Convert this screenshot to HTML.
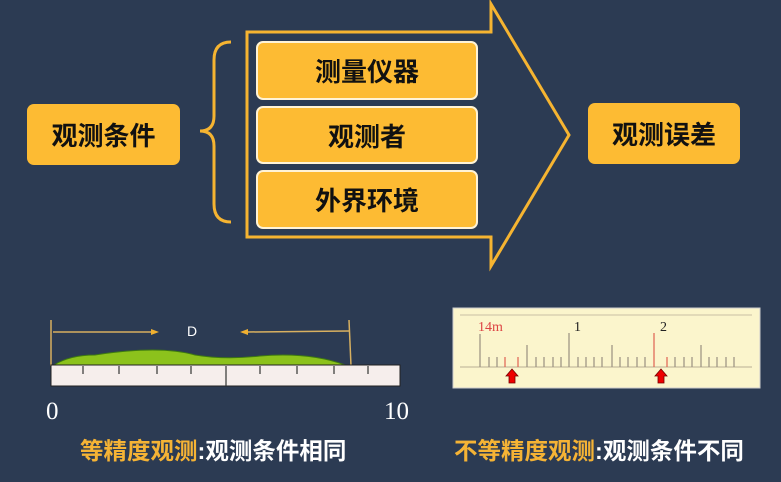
<!DOCTYPE html>
<html><head><meta charset="utf-8"><style>
body{margin:0;width:781px;height:482px;background:#2c3b53;overflow:hidden;position:relative;font-family:"Liberation Sans","Noto Sans CJK SC",sans-serif}
.b{position:absolute;background:#fdbb33;border-radius:7px;color:#111;font-weight:bold;display:flex;align-items:center;justify-content:center;font-size:26px}
.w{border:2px solid #fff3d6;box-sizing:border-box}
.cap{position:absolute;font-weight:bold;font-size:23.5px;color:#fff;white-space:nowrap}
.cap span{color:#f5b335}
</style></head><body>
<svg width="781" height="482" style="position:absolute;left:0;top:0">
<path d="M247 32 H491 V4 L569 135 L491 266 V237 H247 Z" fill="none" stroke="#f6b431" stroke-width="3"/>
<path d="M231 42 Q214 42 214 60 V116 Q214 131 200 131 Q214 131 214 146 V204 Q214 222 231 222" fill="none" stroke="#f6b431" stroke-width="3"/>
<line x1="51" y1="320" x2="51" y2="366" stroke="#d8b060" stroke-width="1.5"/>
<line x1="349" y1="320" x2="351" y2="366" stroke="#d8b060" stroke-width="1.5"/>
<line x1="53" y1="332" x2="152" y2="332" stroke="#d8b060" stroke-width="1.5"/>
<path d="M151 329 L159 332 L151 335Z" fill="#f0b030"/>
<line x1="248" y1="332" x2="349" y2="331" stroke="#d8b060" stroke-width="1.5"/>
<path d="M248 329 L240 332 L248 335Z" fill="#f0b030"/>
<text x="187" y="336" fill="#fff" font-size="14" font-family="Liberation Sans">D</text>
<path d="M54 365 Q70 355 95 355 Q160 345 195 355 Q225 360 260 356 Q310 352 345 365Z" fill="#8cc21c" stroke="#3e7a10"/>
<rect x="51" y="365" width="349" height="21" fill="#f6eeec" stroke="#222"/>
<g stroke="#333" stroke-width="1.2">
<line x1="83" y1="366" x2="83" y2="374"/><line x1="119" y1="366" x2="119" y2="374"/><line x1="157" y1="366" x2="157" y2="374"/><line x1="191" y1="366" x2="191" y2="374"/><line x1="226" y1="366" x2="226" y2="386"/><line x1="260" y1="366" x2="260" y2="374"/><line x1="297" y1="366" x2="297" y2="374"/><line x1="334" y1="366" x2="334" y2="374"/><line x1="368" y1="366" x2="368" y2="374"/></g>
<text x="46" y="419" fill="#fff" font-size="25" font-family="Liberation Serif">0</text>
<text x="384" y="419" fill="#fff" font-size="25" font-family="Liberation Serif">10</text>
<rect x="453" y="308" width="307" height="80" fill="#fbf5cc" stroke="#ccc"/>
<line x1="460" y1="315" x2="752" y2="315" stroke="#c8bfa5"/>
<line x1="460" y1="367" x2="752" y2="367" stroke="#b8ae95"/>
<g stroke="#9a9080" stroke-width="1.2">
<line x1="480" y1="334" x2="480" y2="367"/>
<line x1="489" y1="357" x2="489" y2="367"/><line x1="497" y1="357" x2="497" y2="367"/>
<line x1="527" y1="345" x2="527" y2="367"/><line x1="536" y1="357" x2="536" y2="367"/><line x1="544" y1="357" x2="544" y2="367"/><line x1="553" y1="357" x2="553" y2="367"/><line x1="561" y1="357" x2="561" y2="367"/>
<line x1="569" y1="333" x2="569" y2="367"/><line x1="578" y1="357" x2="578" y2="367"/><line x1="586" y1="357" x2="586" y2="367"/><line x1="594" y1="357" x2="594" y2="367"/><line x1="602" y1="357" x2="602" y2="367"/>
<line x1="612" y1="345" x2="612" y2="367"/><line x1="620" y1="357" x2="620" y2="367"/><line x1="628" y1="357" x2="628" y2="367"/><line x1="637" y1="357" x2="637" y2="367"/><line x1="645" y1="357" x2="645" y2="367"/>
<line x1="675" y1="357" x2="675" y2="367"/><line x1="684" y1="357" x2="684" y2="367"/><line x1="692" y1="357" x2="692" y2="367"/>
<line x1="701" y1="345" x2="701" y2="367"/><line x1="709" y1="357" x2="709" y2="367"/><line x1="717" y1="357" x2="717" y2="367"/><line x1="726" y1="357" x2="726" y2="367"/><line x1="734" y1="357" x2="734" y2="367"/></g>
<g stroke="#e06050" stroke-width="1.2"><line x1="505" y1="357" x2="505" y2="367"/><line x1="518" y1="357" x2="518" y2="367"/><line x1="654" y1="333" x2="654" y2="367"/><line x1="667" y1="357" x2="667" y2="367"/></g>
<text x="478" y="331" fill="#d44" font-size="14" font-family="Liberation Serif">14m</text>
<text x="574" y="331" fill="#222" font-size="14" font-family="Liberation Serif">1</text>
<text x="660" y="331" fill="#222" font-size="14" font-family="Liberation Serif">2</text>
<path d="M512 369 L518 376 H515 V383 H509 V376 H506Z" fill="#e00" stroke="#700" stroke-width=".8"/>
<path d="M661 369 L667 376 H664 V383 H658 V376 H655Z" fill="#e00" stroke="#700" stroke-width=".8"/>
</svg>
<div class="b" style="left:27px;top:104px;width:153px;height:61px">观测条件</div>
<div class="b" style="left:588px;top:103px;width:152px;height:61px">观测误差</div>
<div class="b w" style="left:256px;top:41px;width:222px;height:59px">测量仪器</div>
<div class="b w" style="left:256px;top:106px;width:222px;height:58px">观测者</div>
<div class="b w" style="left:256px;top:170px;width:222px;height:59px">外界环境</div>
<div class="cap" style="left:80px;top:432px"><span>等精度观测</span>:观测条件相同</div>
<div class="cap" style="left:454px;top:432px"><span>不等精度观测</span>:观测条件不同</div>
</body></html>
